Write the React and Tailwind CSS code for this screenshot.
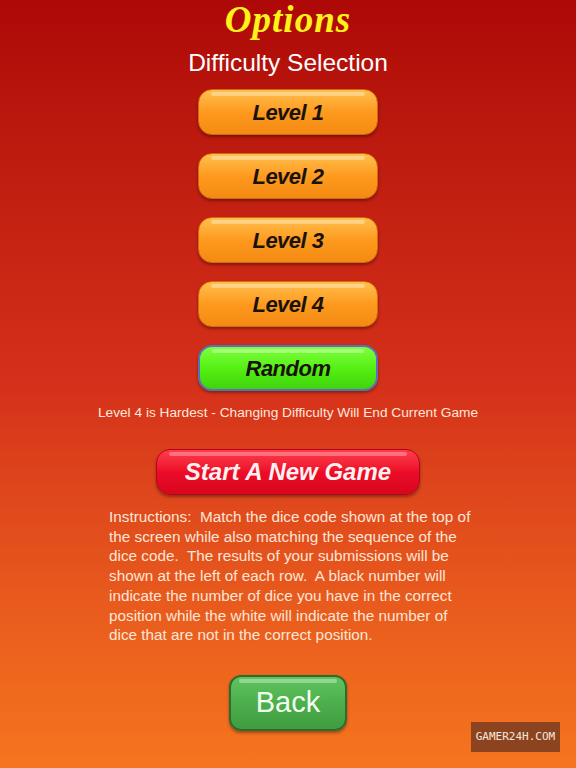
import React, { useState } from "react";

const levels = ["Level 1", "Level 2", "Level 3", "Level 4"];

const LevelButton = ({ label, active, onClick }) => {
  const base =
    "relative w-[180px] h-[46px] rounded-[14px] flex items-center justify-center text-[22px] font-bold italic text-[#1a1208] overflow-hidden";
  const skin = active
    ? "bg-gradient-to-b from-[#7dff3a] via-[#55f014] to-[#3fd40a] border-2 border-[#5a6fb8] shadow-[0_2px_3px_rgba(0,0,0,0.35)]"
    : "bg-gradient-to-b from-[#ffc04a] via-[#ff9a1e] to-[#f48a12] border border-[#d46a10] shadow-[0_2px_3px_rgba(0,0,0,0.35)]";

  return (
    <button onClick={onClick} className={`${base} ${skin}`}>
      {/* gloss */}
      <span className="absolute left-3 right-3 top-[2px] h-[4px] rounded-full bg-white/35" />
      <span className="relative tracking-[-0.5px]">{label}</span>
    </button>
  );
};

const App = () => {
  const [level, setLevel] = useState("Random");

  return (
    <div
      className="w-[576px] h-[768px] overflow-hidden flex flex-col items-center bg-gradient-to-b from-[#ae0707] via-[#d5301a] to-[#f6751f] relative"
      style={{ fontFamily: '"Liberation Sans", Arial, sans-serif' }}
    >
      <h1
        className="mt-0 h-[40px] text-[37px] leading-[40px] font-bold italic tracking-[1px] text-[#fff21a]"
        style={{ fontFamily: '"Liberation Serif", "Times New Roman", serif' }}
      >
        Options
      </h1>
      <h2 className="mt-[9px] text-[24.5px] leading-[28px] text-white">Difficulty Selection</h2>

      {/* Difficulty buttons */}
      <div className="mt-[12px] flex flex-col items-center gap-[18px]">
        {levels.map((l) => (
          <LevelButton key={l} label={l} active={level === l} onClick={() => setLevel(l)} />
        ))}
        <LevelButton label="Random" active={level === "Random"} onClick={() => setLevel("Random")} />
      </div>

      <p className="mt-[14px] text-[13.7px] leading-[16px] text-[#fde8dc]">
        Level 4 is Hardest - Changing Difficulty Will End Current Game
      </p>

      {/* Start game */}
      <button className="mt-[28px] relative w-[264px] h-[46px] rounded-[14px] flex items-center justify-center overflow-hidden bg-gradient-to-b from-[#ff3a4c] via-[#ec0c28] to-[#d80620] border border-[#b0081a] shadow-[0_2px_3px_rgba(0,0,0,0.35)]">
        <span className="absolute left-3 right-3 top-[2px] h-[4px] rounded-full bg-white/30" />
        <span className="relative text-[24px] font-bold italic text-[#fff0f0]">Start A New Game</span>
      </button>

      {/* Instructions */}
      <p className="mt-[12px] w-[364px] ml-[6px] text-[15.3px] leading-[19.7px] text-[#fde6d8]">
        Instructions:&nbsp; Match the dice code shown at the top of the screen while also matching the
        sequence of the dice code.&nbsp; The results of your submissions will be shown at the left of each
        row.&nbsp; A black number will indicate the number of dice you have in the correct position while
        the white will indicate the number of dice that are not in the correct position.
      </p>

      {/* Back */}
      <button className="mt-[30px] relative w-[118px] h-[56px] rounded-[12px] flex items-center justify-center overflow-hidden bg-gradient-to-b from-[#5fc45f] via-[#4caf4c] to-[#3f9c40] border-2 border-[#2f6a2f] shadow-[0_2px_3px_rgba(0,0,0,0.35)]">
        <span className="absolute left-2 right-2 top-[2px] h-[4px] rounded-full bg-white/35" />
        <span className="relative text-[29px] text-[#f2fff0]">Back</span>
      </button>

      {/* watermark */}
      <div
        className="absolute left-[471px] top-[722px] w-[89px] h-[30px] bg-[#8c4420] flex items-center justify-center text-[11px] text-[#f5e6dc]"
        style={{ fontFamily: '"DejaVu Sans Mono", monospace' }}
      >
        GAMER24H.COM
      </div>
    </div>
  );
};

export default App;
